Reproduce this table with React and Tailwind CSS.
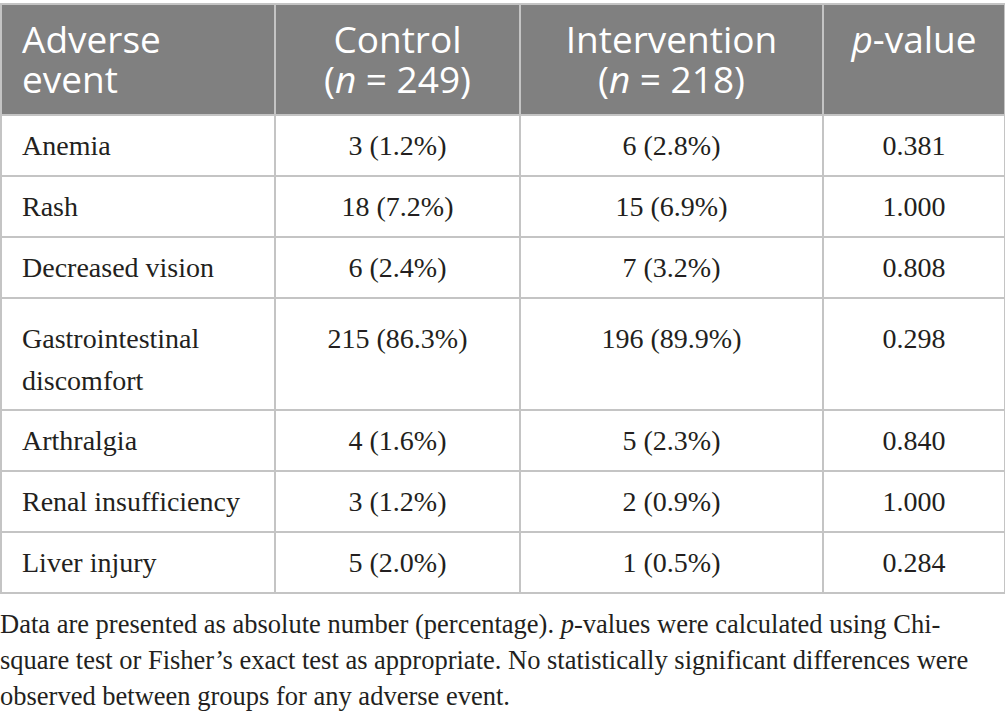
import React from "react";

const rows = [
  ["Anemia", "3 (1.2%)", "6 (2.8%)", "0.381"],
  ["Rash", "18 (7.2%)", "15 (6.9%)", "1.000"],
  ["Decreased vision", "6 (2.4%)", "7 (3.2%)", "0.808"],
  ["Gastrointestinal discomfort", "215 (86.3%)", "196 (89.9%)", "0.298"],
  ["Arthralgia", "4 (1.6%)", "5 (2.3%)", "0.840"],
  ["Renal insufficiency", "3 (1.2%)", "2 (0.9%)", "1.000"],
  ["Liver injury", "5 (2.0%)", "1 (0.5%)", "0.284"],
];

const App = () => {
  return (
    <div className="w-[1005px] h-[721px] bg-white overflow-hidden pt-[3px]">
      <table className="w-[1004px] table-fixed border-collapse">
        <colgroup>
          <col className="w-[274px]" />
          <col className="w-[245px]" />
          <col className="w-[303px]" />
          <col className="w-[182px]" />
        </colgroup>
        {/* Header */}
        <thead>
          <tr className="bg-[#808080] text-white font-['Open_Sans',sans-serif] text-[37px] leading-[40px]">
            <th className="border-2 border-[#c4c4c4] font-normal text-left align-top px-[20px] pt-[14px] pb-[15px]">
              Adverse
              <br />
              event
            </th>
            <th className="border-2 border-[#c4c4c4] font-normal text-center align-top pt-[14px] pb-[15px]">
              Control
              <br />(<i>n</i> = 249)
            </th>
            <th className="border-2 border-[#c4c4c4] font-normal text-center align-top pt-[14px] pb-[15px]">
              Intervention
              <br />(<i>n</i> = 218)
            </th>
            <th className="border-2 border-[#c4c4c4] font-normal text-center align-top pt-[14px] pb-[15px]">
              <i>p</i>-value
            </th>
          </tr>
        </thead>
        <tbody className="font-['Liberation_Serif',serif] text-[#231f20] text-[28px] leading-[42px]">
          {rows.map((r) => {
            // the two-line row sits lower in its cell
            const pad = r[0].length > 20 ? "pt-[19px] pb-[7px]" : "pt-[9px] pb-[8px]";
            return (
              <tr key={r[0]}>
                <td className={"border-2 border-[#c4c4c4] align-top pl-[20px] pr-2 " + pad}>
                  {r[0]}
                </td>
                <td className={"border-2 border-[#c4c4c4] align-top text-center " + pad}>
                  {r[1]}
                </td>
                <td className={"border-2 border-[#c4c4c4] align-top text-center " + pad}>
                  {r[2]}
                </td>
                <td className={"border-2 border-[#c4c4c4] align-top text-center " + pad}>
                  {r[3]}
                </td>
              </tr>
            );
          })}
        </tbody>
      </table>

      {/* Footnote */}
      <div className="font-['Liberation_Serif',serif] text-[#231f20] text-[26.5px] leading-[36px] mt-[12px]">
        <div>
          Data are presented as absolute number (percentage). <i>p</i>-values were calculated using Chi-
        </div>
        <div>
          square test or Fisher’s exact test as appropriate. No statistically significant differences were
        </div>
        <div>observed between groups for any adverse event.</div>
      </div>
    </div>
  );
};

export default App;
